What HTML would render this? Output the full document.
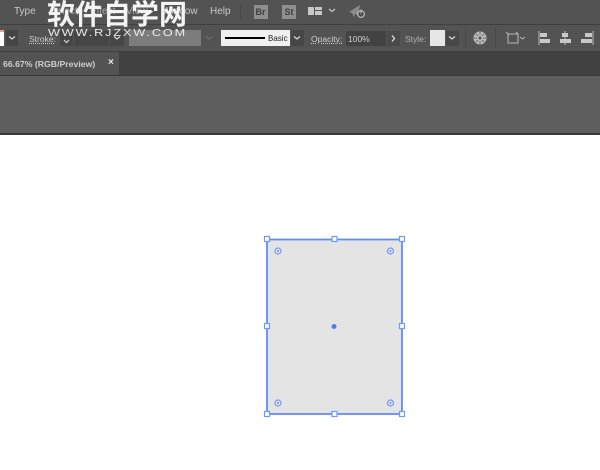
<!DOCTYPE html>
<html><head><meta charset="utf-8">
<style>
html,body{margin:0;padding:0;background:#fff}
#p{position:relative;width:600px;height:470px;overflow:hidden;background:#fff;font-family:"Liberation Sans",sans-serif}
.a{position:absolute}
.t{position:absolute;white-space:nowrap;color:#c8c8c8;font-size:10px;line-height:12px}
.b{font-weight:bold;font-size:8.5px;color:#d2d2d2}
svg{position:absolute;left:0;top:0}
</style></head><body>
<div id="p">
<div class="a" style="left:0;top:0;width:600px;height:24px;background:#535353"></div>
<div class="a" style="left:0;top:24px;width:600px;height:1px;background:#404040"></div>
<div class="a" style="left:0;top:25px;width:600px;height:26px;background:#535353"></div>
<div class="a" style="left:0;top:51px;width:600px;height:24px;background:#414141"></div>
<div class="a" style="left:0;top:52px;width:119px;height:23px;background:#535353"></div>
<div class="a" style="left:0;top:75px;width:600px;height:1px;background:#383838"></div>
<div class="a" style="left:0;top:76px;width:600px;height:58px;background:#5d5d5d"></div>
<div class="a" style="left:0;top:133px;width:600px;height:2px;background:#383838"></div>

<div class="t" style="left:14px;top:6px">Type</div>
<div class="t" style="left:50px;top:6px;color:#aaa">Select</div>
<div class="t" style="left:90px;top:6px;color:#aaa">Effect</div>
<div class="t" style="left:126px;top:6px;color:#aaa">View</div>
<div class="t" style="left:162px;top:6px">Window</div>
<div class="t" style="left:210px;top:6px">Help</div>
<div class="a" style="left:240px;top:5px;width:1px;height:15px;background:#484848"></div>
<div class="a" style="left:254px;top:5px;width:14px;height:14px;background:#8e8e8e"></div>
<div class="t" style="left:255.500px;top:6px;color:#3e3e3e;font-weight:bold;font-size:9px">Br</div>
<div class="a" style="left:282px;top:5px;width:14px;height:14px;background:#8e8e8e"></div>
<div class="t" style="left:284.500px;top:6px;color:#3e3e3e;font-weight:bold;font-size:9px">St</div>

<div class="a" style="left:0;top:30px;width:4px;height:16px;background:#fff"></div>
<div class="a" style="left:6px;top:30px;width:12px;height:16px;background:#454545"></div>
<div class="t" style="left:29px;top:33px;font-size:8.500px;color:#cfcfcf;text-decoration:underline dotted">Stroke:</div>
<div class="a" style="left:60px;top:31px;width:13px;height:15px;background:#464646"></div>
<div class="a" style="left:74px;top:31px;width:35px;height:15px;background:#464646"></div>
<div class="a" style="left:110px;top:31px;width:14px;height:15px;background:#464646"></div>
<div class="a" style="left:129px;top:30px;width:72px;height:16px;background:#7c7c7c"></div>
<div class="a" style="left:221px;top:30px;width:69px;height:16px;background:#f0f0f0"></div>
<div class="a" style="left:225px;top:37px;width:40px;height:2px;background:#000"></div>
<div class="t" style="left:268px;top:32.500px;font-size:8px;color:#222">Basic</div>
<div class="a" style="left:291px;top:30px;width:13px;height:16px;background:#464646"></div>
<div class="t" style="left:311px;top:33px;font-size:8.500px;color:#cfcfcf;text-decoration:underline dotted">Opacity:</div>
<div class="a" style="left:346px;top:31px;width:40px;height:15px;background:#424242"></div>
<div class="t" style="left:348px;top:33px;font-size:8.500px;color:#d2d2d2">100%</div>
<div class="a" style="left:387px;top:31px;width:13px;height:15px;background:#4a4a4a"></div>
<div class="t" style="left:405px;top:33px;font-size:8.500px;color:#b0b0b0">Style:</div>
<div class="a" style="left:430px;top:30px;width:15px;height:16px;background:#e6e6e6"></div>
<div class="a" style="left:446px;top:31px;width:13px;height:15px;background:#474747"></div>
<div class="a" style="left:465px;top:29px;width:1px;height:19px;background:#484848"></div>
<div class="a" style="left:495px;top:29px;width:1px;height:19px;background:#484848"></div>

<div class="t" style="left:3px;top:58px;font-size:8.700px;font-weight:bold;color:#cfcfcf">66.67% (RGB/Preview)</div>
<div class="t" style="left:108px;top:57px;font-size:10px;font-weight:bold;color:#e8e8e8">×</div>

<svg width="600" height="470" viewBox="0 0 600 470" fill="none">
<path d="M308 7h6v8h-6zM315 7h7v3h-7zM315 11h7v4h-7z" fill="#c8c8c8"/>
<path d="M329 9l3 2.500 3-2.500" stroke="#c8c8c8" stroke-width="1.200"/>
<path d="M349 12l11-7-2 10-3-1-1 3-2-4z" fill="#8a8a8a"/>
<circle cx="361" cy="14" r="3.400" stroke="#c8c8c8"/><path d="M361 9.500v4" stroke="#c8c8c8"/>
<path d="M9 36.500l3 2.500 3-2.500M64 40l2.500 2.500 2.500-2.500M114 36.500l3 2.500 3-2.500M294 36.500l3 2.500 3-2.500M449 36.500l3 2.500 3-2.500" stroke="#d8d8d8" stroke-width="1.200"/>
<path d="M206 36.500l3 2.500 3-2.500" stroke="#6e6e6e" stroke-width="1.200"/>
<path d="M392 35.500l2.500 3-2.500 3" stroke="#dcdcdc" stroke-width="1.300"/>
<path d="M0 31l4 0" stroke="#d33" stroke-width="1"/>
<circle cx="480" cy="38" r="6.500" fill="#bcbcbc"/>
<circle cx="480" cy="38" r="1.500" fill="#555"/>
<path d="M480 32v3M480 41v3M474 38h3M483 38h3M476 34l2 2M482 40l2 2M484 34l-2 2M478 40l-2 2" stroke="#666"/>
<path d="M508 34h10v9h-10zM506 32l3 3M516 32l2 2" stroke="#b4b4b4" stroke-width="1.100"/>
<path d="M520 37l2.500 2 2.500-2" stroke="#b4b4b4"/>
<path d="M539 31v14" stroke="#b8b8b8"/>
<path d="M540 33h7v4h-7zM540 39h10v4h-10z" fill="#c8c8c8"/>
<path d="M565 31v14" stroke="#b8b8b8"/>
<path d="M562 33h6v4h-6zM560 39h11v4h-11z" fill="#c8c8c8"/>
<path d="M593 31v14" stroke="#b8b8b8"/>
<path d="M585 33h7v4h-7zM581 39h11v4h-11z" fill="#c8c8c8"/>

<rect x="267" y="239.500" width="135" height="174.500" fill="#e4e4e4" stroke="#5f8cff" stroke-width="1.800"/>
<g fill="#fff" stroke="#7098ff" stroke-width="1.200">
<rect x="264.500" y="236.500" width="5" height="5"/><rect x="332" y="236.500" width="5" height="5"/><rect x="399.500" y="236.500" width="5" height="5"/>
<rect x="264.500" y="323.500" width="5" height="5"/><rect x="399.500" y="323.500" width="5" height="5"/>
<rect x="264.500" y="411.500" width="5" height="5"/><rect x="332" y="411.500" width="5" height="5"/><rect x="399.500" y="411.500" width="5" height="5"/>
</g>
<circle cx="334" cy="326.500" r="2.500" fill="#4d7bf0"/>
<g stroke="#7098ff" stroke-width="1.200" fill="none"><circle cx="278" cy="251" r="3"/><circle cx="390.500" cy="251" r="3"/><circle cx="278" cy="403" r="3"/><circle cx="390.500" cy="403" r="3"/></g>
<g fill="#6f90ee"><circle cx="278" cy="251" r="1"/><circle cx="390.500" cy="251" r="1"/><circle cx="278" cy="403" r="1"/><circle cx="390.500" cy="403" r="1"/></g>
</svg>

<div class="t" style="left:47px;top:1px;font-family:'Liberation Sans','Noto Sans CJK SC',sans-serif;font-weight:bold;font-size:28px;line-height:28px;color:#f4f4f4">软件自学网</div>
<div class="t" style="left:48px;top:27px;font-size:10.500px;line-height:12px;color:#ececec;letter-spacing:1.600px;transform:scaleX(1.2);transform-origin:0 0">WWW.RJZXW.COM</div>
</div>
</body></html>
